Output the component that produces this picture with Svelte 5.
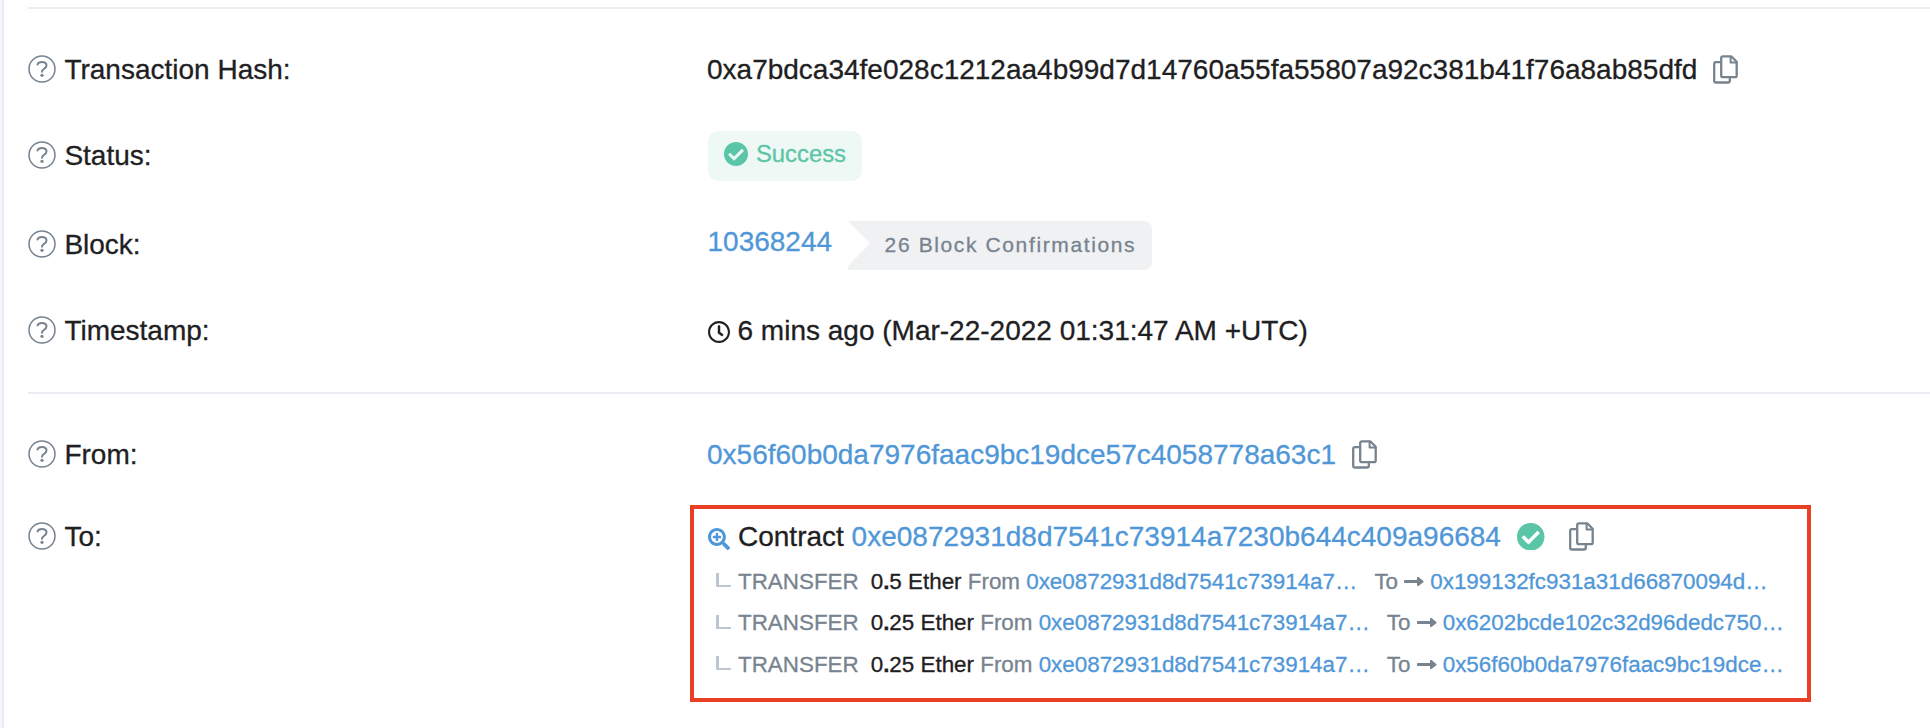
<script>
  const transfers = [
    { whole: '0', frac: '5', from: '0xe0872931d8d7541c73914a7…', to: '0x199132fc931a31d66870094d…' },
    { whole: '0', frac: '25', from: '0xe0872931d8d7541c73914a7…', to: '0x6202bcde102c32d96dedc750…' },
    { whole: '0', frac: '25', from: '0xe0872931d8d7541c73914a7…', to: '0x56f60b0da7976faac9bc19dce…' }
  ];
</script>

{#snippet label(text)}
  <div class="label">
    <svg class="help" viewBox="0 0 28 28" fill="none" stroke="currentColor">
      <circle cx="14" cy="14" r="13" stroke-width="1.5" />
      <path d="M9.500 9.500C10.100 7.700 11.700 6.900 13.900 6.900c2.700 0 4.600 1.300 4.600 3.500 0 3.300-4.500 3.300-4.500 6.300" stroke-width="2" stroke-linecap="round" />
      <circle cx="14" cy="20.300" r="1.600" fill="currentColor" stroke="none" />
    </svg>
    <span>{text}</span>
  </div>
{/snippet}

{#snippet copy()}
  <svg class="copy" viewBox="0 0 25 29" fill="none" stroke="currentColor" stroke-width="2.300" stroke-linejoin="round">
    <path d="M8 7.200H2.900Q1.200 7.200 1.200 9v16.700q0 1.800 1.800 1.800h12q1.800 0 1.800-1.800v-3.400" />
    <path d="M10 1.300h8.200l5.500 5.500v13.600q0 1.800-1.800 1.800H10q-1.800 0-1.800-1.800V3.100q0-1.800 1.800-1.800z" />
    <path d="M17.600 1.500v5.900h6" stroke-width="2" />
  </svg>
{/snippet}

{#snippet check()}
  <svg class="check" viewBox="8 8 496 496" fill="currentColor">
    <path d="M504 256c0 136.967-111.033 248-248 248S8 392.967 8 256 119.033 8 256 8s248 111.033 248 248zM227.314 387.314l184-184c6.248-6.248 6.248-16.379 0-22.627l-22.627-22.627c-6.248-6.249-16.379-6.249-22.628 0L216 308.118l-70.059-70.059c-6.248-6.248-16.379-6.248-22.628 0l-22.627 22.627c-6.248 6.248-6.248 16.379 0 22.627l104 104c6.249 6.249 16.379 6.249 22.628.001z" />
  </svg>
{/snippet}

<main>
  <section class="first">
    <div class="row">
      {@render label('Transaction Hash:')}
      <div class="value">
        <span>0xa7bdca34fe028c1212aa4b99d7d14760a55fa55807a92c381b41f76a8ab85dfd</span>
        {@render copy()}
      </div>
    </div>
    <div class="row status">
      {@render label('Status:')}
      <div class="value">
        <span class="badge">{@render check()}Success</span>
      </div>
    </div>
    <div class="row block">
      {@render label('Block:')}
      <div class="value">
        <a class="number">10368244</a>
        <span class="confirmations">26 Block Confirmations</span>
      </div>
    </div>
    <div class="row time">
      {@render label('Timestamp:')}
      <div class="value">
        <svg class="clock" viewBox="8 8 496 496" fill="currentColor">
          <path d="M256 8C119 8 8 119 8 256s111 248 248 248 248-111 248-248S393 8 256 8zm0 448c-110.500 0-200-89.500-200-200S145.500 56 256 56s200 89.500 200 200-89.500 200-200 200zm61.800-104.400l-84.900-61.700c-3.100-2.300-4.900-5.900-4.900-9.700V116c0-6.600 5.400-12 12-12h32c6.600 0 12 5.400 12 12v141.700l66.800 48.600c5.400 3.900 6.500 11.400 2.600 16.800L334.600 349c-3.900 5.300-11.400 6.500-16.800 2.600z" />
        </svg>
        <span>6 mins ago (Mar-22-2022 01:31:47 AM +UTC)</span>
      </div>
    </div>
  </section>

  <section class="second">
    <div class="row">
      {@render label('From:')}
      <div class="value">
        <a>0x56f60b0da7976faac9bc19dce57c4058778a63c1</a>
        {@render copy()}
      </div>
    </div>
    <div class="row to">
      {@render label('To:')}
      <div class="outlined">
        <div class="value contract">
          <svg class="zoom" viewBox="0 0 512 512" fill="currentColor">
            <path d="M304 192v32c0 6.600-5.400 12-12 12h-56v56c0 6.600-5.400 12-12 12h-32c-6.600 0-12-5.400-12-12v-56h-56c-6.600 0-12-5.400-12-12v-32c0-6.600 5.400-12 12-12h56v-56c0-6.600 5.400-12 12-12h32c6.600 0 12 5.400 12 12v56h56c6.600 0 12 5.400 12 12zm201 284.700L476.700 505c-9.400 9.400-24.600 9.400-33.900 0L343 405.300c-4.500-4.500-7-10.600-7-17V372c-35.300 27.600-79.700 44-128 44C93.100 416 0 322.900 0 208S93.100 0 208 0s208 93.100 208 208c0 48.300-16.400 92.700-44 128h16.300c6.400 0 12.500 2.500 17 7l99.700 99.700c9.300 9.400 9.300 24.600 0 34zM344 208c0-75.200-60.800-136-136-136S72 132.800 72 208s60.800 136 136 136 136-60.800 136-136z" />
          </svg>
          <span>Contract <a>0xe0872931d8d7541c73914a7230b644c409a96684</a></span>
          {@render check()}
          {@render copy()}
        </div>
        <ul>
          {#each transfers as t}
            <li>
              <i class="hook"></i>
              <span class="kind">TRANSFER</span>
              <span class="amount">{t.whole}<b>.</b>{t.frac} Ether</span>
              <span>From</span>
              <a>{t.from}</a>
              <span class="dest">To</span>
              <svg class="arrow" viewBox="0 0 20 11" fill="currentColor">
                <path d="M.8 4.100H13V2c0-1 1.100-1.400 1.800-.7L19.300 5c.4.300.4.900 0 1.200l-4.500 3.600c-.7.600-1.800.200-1.800-.7V7H.8C.3 7 0 6.700 0 6.300V4.800c0-.4.300-.7.8-.7z" />
              </svg>
              <a>{t.to}</a>
            </li>
          {/each}
        </ul>
      </div>
    </div>
  </section>
</main>

<style>
  :global(body) {
    margin: 0;
    background: #f8f8fb;
  }
  main {
    box-sizing: border-box;
    height: 728px;
    margin-left: 2px;
    padding: 7px 0 0 24px;
    border-left: 2px solid #e9eaf3;
    background: #fff;
    overflow: hidden;
    font-family: 'Liberation Sans', Arial, sans-serif;
    font-size: 28px;
    line-height: 42px;
    color: #1e2022;
    white-space: nowrap;
    -webkit-text-stroke: 0.3px currentColor;
  }
  section {
    border-top: 2px solid #ecedf4;
    padding: 40px 0;
  }
  .second {
    padding-bottom: 0;
  }
  .row {
    display: grid;
    grid-template-columns: 679px 1fr;
    height: 42px;
  }
  .status { margin-top: 44px; }
  .block { margin-top: 47px; }
  .time { margin-top: 44px; }
  .to { margin-top: 40px; }
  .label, .value {
    display: flex;
    align-items: center;
    height: 42px;
  }
  svg {
    display: block;
    flex: none;
  }
  .help {
    width: 28px;
    height: 28px;
    margin: -2px 8px 0 0;
    color: #77838f;
  }
  .label span { margin-left: 0.400px; }
  a { color: #4f97d8; }
  .copy {
    width: 25px;
    height: 29px;
    margin: -2px 0 0 16px;
    color: #77838f;
  }
  .badge {
    display: flex;
    align-items: center;
    box-sizing: border-box;
    width: 154px;
    height: 50px;
    margin-left: 1px;
    padding: 0 0 4px 16px;
    border-radius: 11px;
    background: #eef8f5;
    color: #5bc5a7;
    font-size: 23.800px;
  }
  .check { color: #5bc5a7; }
  .badge .check {
    width: 24px;
    height: 24px;
    margin-right: 8px;
  }
  .number { padding: 0 0 6px 0.500px; }
  .confirmations {
    box-sizing: border-box;
    width: 304px;
    height: 49px;
    margin: 1px 0 0 16px;
    padding-left: 36.500px;
    border-radius: 0 8px 8px 0;
    background: #f0f1f3;
    color: #77838f;
    font-size: 21px;
    line-height: 47px;
    letter-spacing: 1.620px;
    clip-path: polygon(0 0, 100% 0, 100% 100%, 0 100%, 0 45px, 22px 22.500px);
  }
  .clock {
    width: 22px;
    height: 22px;
    margin: 2px 7.500px 0 1px;
  }
  .outlined {
    box-sizing: border-box;
    width: 1121px;
    height: 197px;
    margin: -11px 0 0 -17px;
    padding: 7px 0 0 13px;
    border: 4px solid #e94025;
  }
  .zoom {
    width: 22px;
    height: 22px;
    margin: 3px 8px 0 1px;
    color: #4f97d8;
  }
  .contract .check {
    width: 27.500px;
    height: 27.500px;
    margin: -1px 0 0 16.500px;
  }
  .contract .copy { margin-left: 24px; }
  ul {
    margin: 3px 0 0;
    padding: 0;
    list-style: none;
  }
  li {
    display: flex;
    align-items: center;
    height: 41.500px;
    font-size: 22.400px;
    line-height: 34px;
    color: #77838f;
  }
  .hook {
    box-sizing: border-box;
    width: 15px;
    height: 14px;
    margin: -3px 7px 0 9px;
    border: solid #bdc5d1;
    border-width: 0 0 2.500px 3px;
    border-radius: 1px;
  }
  .kind { margin-right: 12px; }
  .amount { color: #1e2022; }
  li span + span:not(.amount), li a { margin-left: 6.200px; }
  li span.dest { margin-left: 17px; }
  .arrow {
    width: 20px;
    height: 11px;
    margin: -1px 0 0 6px;
  }
</style>
